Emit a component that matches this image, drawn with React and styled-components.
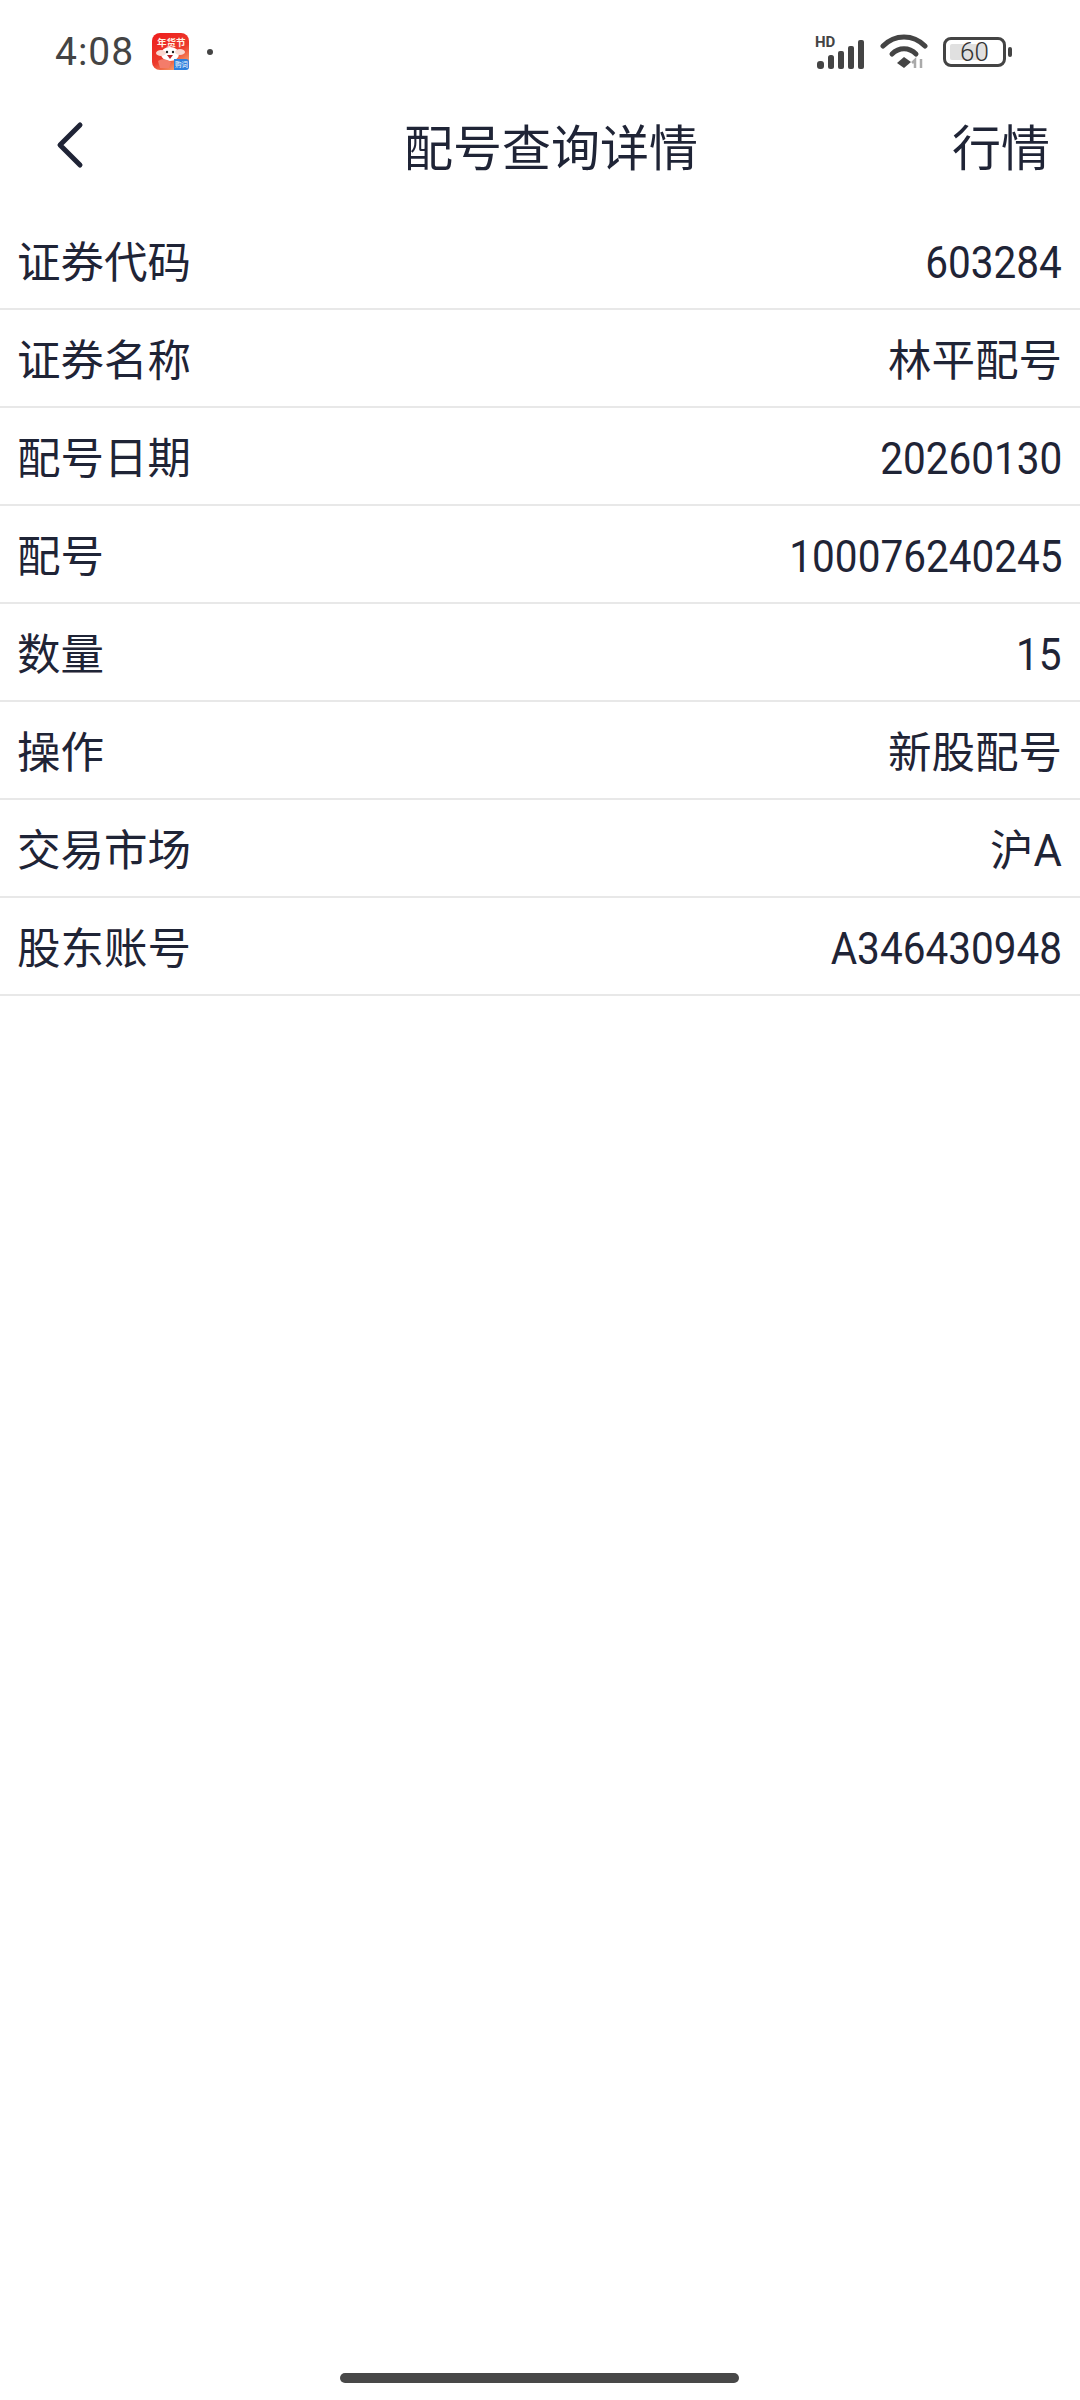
import styled, { createGlobalStyle } from "styled-components";

const rows = [
  ["证券代码", "603284"],
  ["证券名称", "林平配号"],
  ["配号日期", "20260130"],
  ["配号", "100076240245"],
  ["数量", "15"],
  ["操作", "新股配号"],
  ["交易市场", "沪A"],
  ["股东账号", "A346430948"],
];

// latin-only values get squeezed, the original uses a narrow DIN style face
const isLatin = (text) => /^[A-Z0-9]+$/.test(text);

function AppIcon() {
  return (
    <svg width="38" height="38" viewBox="0 0 38 38">
      <defs>
        <linearGradient id="appBg" x1="0" y1="0" x2="0.6" y2="1">
          <stop offset="0" stopColor="#ee1c1c" />
          <stop offset="0.65" stopColor="#ec3a2c" />
          <stop offset="1" stopColor="#f59a66" />
        </linearGradient>
      </defs>
      <rect width="37" height="37" rx="8" fill="url(#appBg)" />
      <text x="5" y="13" fontFamily="'Noto Sans CJK SC', sans-serif" fontWeight="700" fontSize="9.5" fill="#fff3e6">年货节</text>
      <ellipse cx="18" cy="21" rx="9" ry="7" fill="#fff" />
      <ellipse cx="9" cy="20" rx="5" ry="3" fill="#f9d7d0" />
      <ellipse cx="28" cy="19" rx="5" ry="3" fill="#f9d7d0" />
      <circle cx="15" cy="19" r="1.2" fill="#222" />
      <circle cx="21" cy="19" r="1.2" fill="#222" />
      <path d="M15 22h6l-3 4z" fill="#b5232a" />
      <path d="M6 28c4-3 9-2 13 1l-2 6H8z" fill="#f47c6a" />
      <path d="M22 26h12a3 3 0 0 1 3 3v5a3 3 0 0 1-3 3H22z" fill="#2f7fdc" />
      <text x="23" y="34" fontFamily="'Noto Sans CJK SC', sans-serif" fontSize="6.5" fill="#fff">购词</text>
    </svg>
  );
}

function SignalIcon() {
  return (
    <svg width="50" height="36" viewBox="0 0 50 36">
      <text x="0" y="13" fontFamily="Roboto, sans-serif" fontWeight="700" fontSize="15" fill="#444">HD</text>
      <rect x="2" y="27" width="7" height="8" rx="3" fill="#444" />
      <rect x="13" y="21" width="6" height="14" rx="2.5" fill="#444" />
      <rect x="23" y="17" width="6" height="18" rx="2" fill="#444" />
      <rect x="33" y="12" width="6" height="23" rx="2" fill="#444" />
      <rect x="43" y="6" width="6" height="29" rx="2" fill="#444" />
    </svg>
  );
}

function WifiIcon() {
  return (
    <svg width="48" height="36" viewBox="0 0 48 36">
      <path d="M3 12C15 0 33 0 45 12" stroke="#444" strokeWidth="5" fill="none" strokeLinecap="round" />
      <path d="M12 20c7-7 17-7 24 0" stroke="#444" strokeWidth="5" fill="none" strokeLinecap="round" />
      <path d="M17 29l7-6 7 5-7 6z" fill="#444" />
      <path d="M35 34v-8l-3 3M41 25v9" stroke="#aaa" strokeWidth="2.5" fill="none" />
    </svg>
  );
}

function BackIcon() {
  return (
    <svg width="30" height="48" viewBox="0 0 30 48">
      <path d="M25 4L5 24l20 20" stroke="#1f2436" strokeWidth="5" fill="none" strokeLinecap="round" strokeLinejoin="round" />
    </svg>
  );
}

export default function App() {
  return (
    <Page>
      <GlobalStyle />
      <StatusBar>
        <StatusLeft>
          <Time>4:08</Time>
          <AppIcon />
          <Dot />
        </StatusLeft>
        <StatusRight>
          <SignalIcon />
          <WifiIcon />
          <Battery>
            <BatteryBody>
              <BatteryLevel />
              <BatteryText>60</BatteryText>
            </BatteryBody>
            <BatteryCap />
          </Battery>
        </StatusRight>
      </StatusBar>
      <NavBar>
        <BackButton>
          <BackIcon />
        </BackButton>
        <Title>配号查询详情</Title>
        <NavAction>行情</NavAction>
      </NavBar>
      <List>
        {rows.map(([label, value]) => (
          <Row key={label}>
            <span>{label}</span>
            <Value $latin={isLatin(value)}>{value}</Value>
          </Row>
        ))}
      </List>
      <HomeBar />
    </Page>
  );
}

const GlobalStyle = createGlobalStyle`
  html, body {
    margin: 0;
    padding: 0;
    background: #fff;
  }
`;

const Page = styled.div`
  position: relative;
  width: 1080px;
  height: 2400px;
  overflow: hidden;
  background: #fff;
  color: #1f2436;
  font-family: "Noto Sans CJK SC", sans-serif;
`;

const StatusBar = styled.div`
  height: 104px;
  padding: 0 68px 0 55px;
  box-sizing: border-box;
  display: flex;
  justify-content: space-between;
  align-items: center;
`;

const StatusLeft = styled.div`
  display: flex;
  align-items: center;
`;

const Time = styled.span`
  width: 97px;
  font-family: Roboto, sans-serif;
  font-size: 39px;
  letter-spacing: 1px;
  color: #444;
`;

const Dot = styled.span`
  width: 6px;
  height: 6px;
  margin-left: 17px;
  border-radius: 50%;
  background: #444;
`;

const StatusRight = styled.div`
  display: flex;
  align-items: center;
  gap: 15px;
`;

const Battery = styled.div`
  display: flex;
  align-items: center;
  gap: 2px;
`;

const BatteryBody = styled.div`
  position: relative;
  width: 63px;
  height: 30px;
  box-sizing: border-box;
  border: 3px solid #444;
  border-radius: 8px;
  display: flex;
  align-items: center;
  justify-content: center;
`;

const BatteryLevel = styled.div`
  position: absolute;
  left: 4px;
  top: 4px;
  bottom: 4px;
  width: 36px;
  background: #e0e0e0;
  border-radius: 2px;
`;

const BatteryText = styled.span`
  position: relative;
  font-family: Roboto, sans-serif;
  font-size: 26px;
  font-weight: 300;
  color: #333;
`;

const BatteryCap = styled.div`
  width: 4px;
  height: 10px;
  background: #444;
  border-radius: 2px;
`;

const NavBar = styled.div`
  position: relative;
  height: 86px;
  padding: 0 30px 0 55px;
  display: flex;
  align-items: center;
  justify-content: space-between;
`;

const BackButton = styled.div`
  display: flex;
  margin-top: -4px;
`;

const Title = styled.div`
  position: absolute;
  left: 0;
  right: 0;
  top: -2px;
  padding-left: 22px;
  line-height: 86px;
  text-align: center;
  font-size: 49px;
`;

const NavAction = styled.div`
  margin-top: -4px;
  font-size: 49px;
  line-height: 86px;
`;

const List = styled.div`
  margin-top: 22px;
`;

const Row = styled.div`
  height: 98px;
  box-sizing: border-box;
  padding: 0 18px 0 17px;
  border-bottom: 2px solid #e8e8e8;
  display: flex;
  justify-content: space-between;
  align-items: baseline;
  font-size: 43.5px;
  line-height: 96px;
`;

const Value = styled.span`
  display: inline-block;
  font-family: Roboto, "Noto Sans CJK SC", sans-serif;
  font-size: ${(p) => (p.$latin ? "45px" : "43.5px")};
  transform: ${(p) => (p.$latin ? "scaleX(0.9)" : "none")};
  transform-origin: right center;
`;

const HomeBar = styled.div`
  position: absolute;
  left: 340px;
  top: 2373px;
  width: 399px;
  height: 10px;
  border-radius: 5px;
  background: #484848;
`;
